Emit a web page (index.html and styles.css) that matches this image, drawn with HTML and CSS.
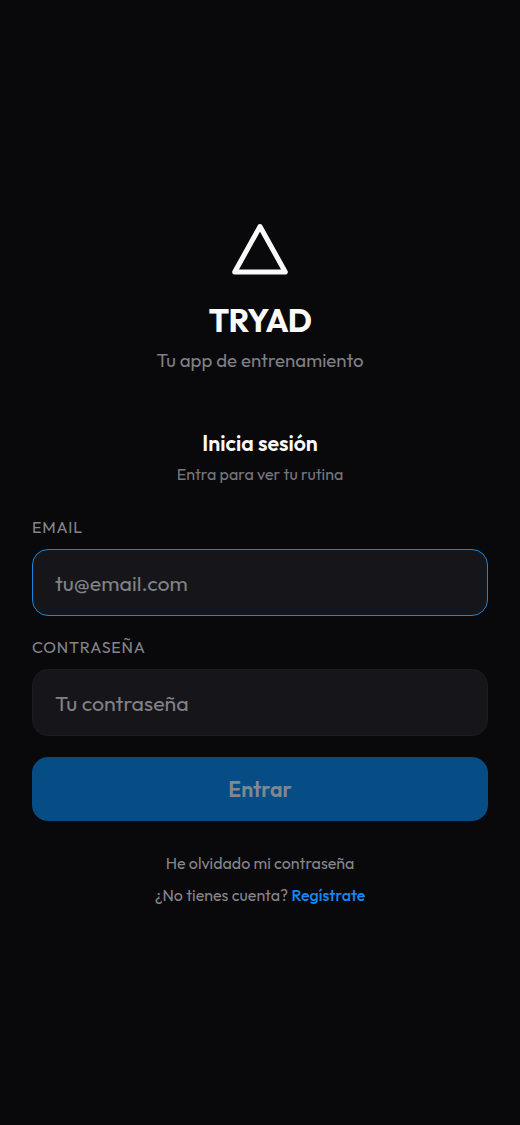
FILE: index.html
```html
<!DOCTYPE html>
<html lang="es">
<head>
<meta charset="utf-8">
<meta name="viewport" content="width=device-width, initial-scale=1">
<title>TRYAD</title>
<link rel="stylesheet" href="styles.css">
</head>
<body>
<main class="login">
  <header class="brand">
    <svg class="logo" width="64" height="64" viewBox="0 0 64 64" fill="none" aria-hidden="true"><path d="M32 10.5 57.3 56H6.7Z" stroke="#fafafa" stroke-width="5" stroke-linejoin="round"/></svg>
    <h1 class="brand-name"><span>TRYAD</span></h1>
    <p class="tagline"><span>Tu app de entrenamiento</span></p>
  </header>
  <form class="form">
    <h2 class="title"><span>Inicia sesión</span></h2>
    <p class="subtitle"><span>Entra para ver tu rutina</span></p>
    <label class="label label-email" for="email"><span>EMAIL</span></label>
    <div class="field field-active"><input class="input input-email" id="email" type="email" placeholder="tu@email.com"></div>
    <label class="label label-password" for="password"><span>CONTRASEÑA</span></label>
    <div class="field"><input class="input input-password" id="password" type="password" placeholder="Tu contraseña"></div>
    <button class="submit" type="button"><span>Entrar</span></button>
  </form>
  <nav class="links">
    <a class="forgot"><span>He olvidado mi contraseña</span></a>
    <p class="signup"><span class="question">¿No tienes cuenta?</span> <a class="register">Regístrate</a></p>
  </nav>
</main>
</body>
</html>
```
FILE: styles.css
```css
* { box-sizing: border-box; }
body {
  margin: 0;
  background: #09090b;
  color: #fafafa;
  font-family: "Outfit", Lato, "Liberation Sans", sans-serif;
}
h1, h2, p { margin: 0; }
.login { min-height: 1125px; padding: 217px 32px 0; }
.brand { display: flex; flex-direction: column; align-items: center; text-align: center; }
.logo { display: block; margin-top: -1px; }
.brand-name { margin-top: 19px; font-size: 32px; line-height: 42px; font-weight: 700; letter-spacing: -0.64px; }
.tagline { margin-top: 6px; font-size: 18.667px; line-height: 26px; color: #7f7f86; }
.form { display: flex; flex-direction: column; margin-top: 56px; }
.title { text-align: center; font-size: 21.333px; line-height: 30px; font-weight: 600; }
.subtitle { margin-top: 3px; text-align: center; font-size: 16px; line-height: 24px; color: #77777e; }
.label { margin-top: 30px; font-size: 16px; line-height: 22px; letter-spacing: 0.8px; color: #85858b; }
.label-password { margin-top: 20px; }
.field {
  height: 67px;
  margin-top: 11px;
  padding: 0 22px;
  border: 1.333px solid #1c1c20;
  border-radius: 16px;
  background: #16161a;
}
.field-active { border-color: #1d86dc; }
.input {
  width: 100%;
  height: 100%;
  padding: 2px 0 0;
  border: 0;
  outline: 0;
  background: transparent;
  color: #fafafa;
  font: inherit;
  font-size: 21.333px;
}
.input::placeholder { color: #818188; opacity: 1; }
.submit {
  height: 64px;
  margin-top: 21px;
  border: 0;
  border-radius: 16px;
  background: #064d86;
  color: #83878e;
  font: inherit;
  font-size: 21.333px;
  font-weight: 600;
}
.links { display: flex; flex-direction: column; align-items: center; margin-top: 30px; font-size: 16px; line-height: 24px; color: #85858b; }
.signup { margin-top: 8px; }
.register { color: #1688f5; font-weight: 500; }
```
